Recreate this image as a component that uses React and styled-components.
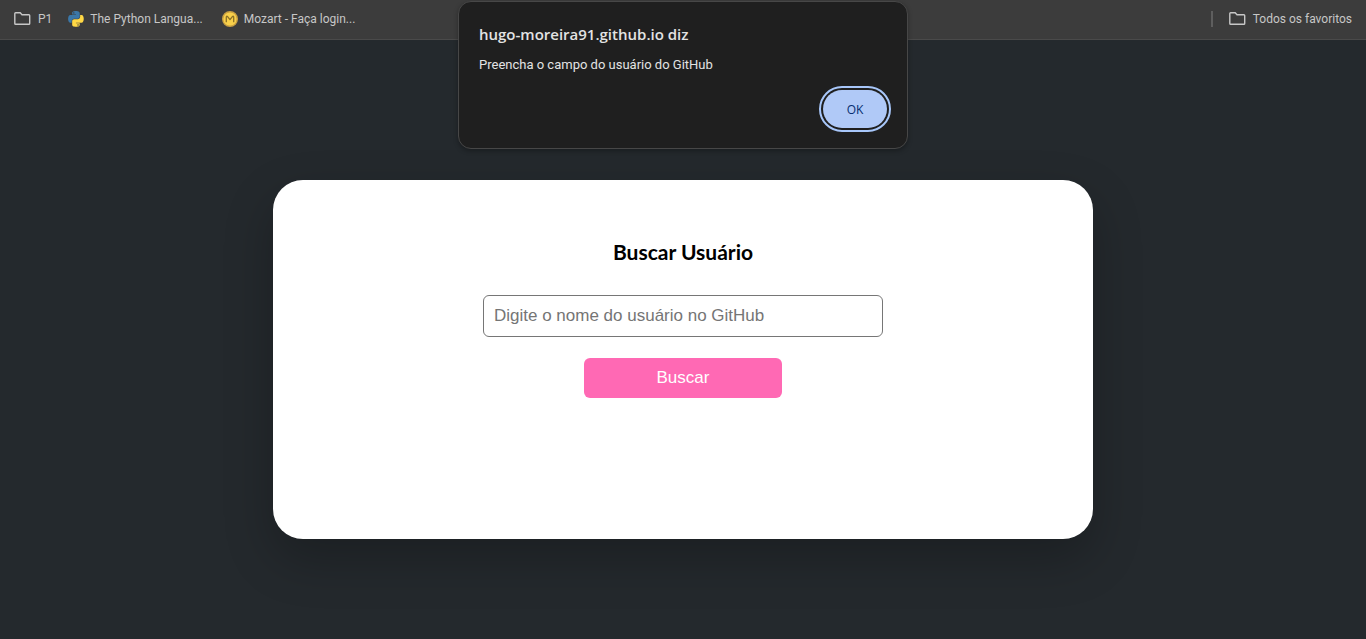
import React from "react";
import styled, { createGlobalStyle } from "styled-components";

const GlobalStyle = createGlobalStyle`
  *, *::before, *::after { box-sizing: border-box; }
  body {
    margin: 0;
    background: #24292d;
    font-family: Roboto, "Open Sans", sans-serif;
  }
`;

const Page = styled.div`
  min-height: 100vh;
  display: flex;
  flex-direction: column;
`;

const BookmarksBar = styled.nav`
  display: flex;
  align-items: center;
  height: 40px;
  padding: 0 14px 2px;
  background: #3c3c3c;
  border-bottom: 1px solid #4a4a4a;
`;

const Bookmark = styled.a`
  display: flex;
  align-items: center;
  gap: ${(p) => p.$gap || 6}px;
  margin-right: ${(p) => p.$after || 0}px;
  color: #c7c7c7;
  font-size: 12px;
  line-height: 16px;
  white-space: nowrap;
  text-decoration: none;

  svg { flex: none; }
`;

const BarDivider = styled.span`
  width: 2px;
  height: 16px;
  margin: 0 16px 0 auto;
  background: #5e5e5e;
`;

const Dialog = styled.section`
  position: absolute;
  top: 1px;
  left: 50%;
  transform: translateX(-50%);
  width: 450px;
  padding: 21px 20px 20px;
  border: 1px solid #474747;
  border-radius: 13px;
  background: #1f1f1f;
  box-shadow: 0 2px 5px rgba(0, 0, 0, 0.3);
  color: #e3e3e3;
`;

const DialogTitle = styled.h2`
  margin: 0 0 11px;
  font-family: "Open Sans", sans-serif;
  font-size: 15px;
  font-weight: 600;
  line-height: 22px;
`;

const DialogText = styled.p`
  margin: 0 0 16px;
  font-size: 13px;
  line-height: 18px;
`;

const DialogActions = styled.div`
  display: flex;
  justify-content: flex-end;
`;

const OkButton = styled.button`
  width: 64px;
  height: 38px;
  padding: 0;
  border: 0;
  border-radius: 19px;
  outline: 2px solid #a8c7fa;
  outline-offset: 2px;
  background: #b0c9f7;
  color: #062e6f;
  font-family: "Open Sans", sans-serif;
  font-size: 12px;
  font-weight: 500;
`;

const Card = styled.main`
  width: 60%;
  min-height: 359px;
  margin: 140px auto 100px;
  padding: 60px 20px;
  display: flex;
  flex-direction: column;
  align-items: center;
  border-radius: 30px;
  background: #fff;
  box-shadow: 0 20px 50px rgba(0, 0, 0, 0.24);
`;

const SearchForm = styled.form`
  display: flex;
  flex-direction: column;
  align-items: center;
  width: 100%;
`;

const SearchLabel = styled.label`
  margin-bottom: 31px;
  color: #000;
  font-family: Lato, sans-serif;
  font-size: 21px;
  font-weight: 700;
  line-height: 24px;
`;

const SearchInput = styled.input`
  width: 400px;
  max-width: 100%;
  height: 42px;
  padding: 0 10px;
  border: 1px solid #767676;
  border-radius: 6px;
  background: #fff;
  font-family: "Liberation Sans", Arial, sans-serif;
  font-size: 17px;

  &::placeholder { color: #757575; opacity: 1; }
`;

const SearchButton = styled.button`
  width: 198px;
  height: 40px;
  margin-top: 21px;
  padding: 0;
  border: 0;
  border-radius: 6px;
  background: #ff69b4;
  color: #fff;
  font-family: "Liberation Sans", Arial, sans-serif;
  font-size: 17px;
`;

function FolderIcon() {
  return (
    <svg width="17" height="13" viewBox="0 0 17 13" aria-hidden="true">
      <path
        d="M.8 1.6V11.4Q.8 12.2 1.600 12.200H14.900Q15.700 12.200 15.700 11.400V3.600Q15.700 2.800 14.900 2.800H8L6.200.8H1.600Q.8.8.8 1.600Z"
        fill="none"
        stroke="#c7c7c7"
        strokeWidth="1.4"
      />
    </svg>
  );
}

function PythonIcon() {
  return (
    <svg width="16" height="16" viewBox="0 0 111 114" aria-hidden="true">
      <path
        fill="#3b77a8"
        d="M54.3 0C49.7 0 45.4.4 41.5 1.1 30.1 3.1 28 7.3 28 15.2V25.5H55V29H18C10.2 29 3.3 33.7 1.1 42.6-1.4 52.8-1.5 59.2 1.1 70 3.1 78 7.7 83.7 15.5 83.7H24.8V71.4C24.8 62.5 32.5 54.6 41.7 54.6H68.5C76 54.6 82 48.4 82 40.9V15.2C82 7.9 75.8 2.4 68.5 1.1 63.9.3 58.9 0 54.3 0ZM39.7 8.3A5.2 5.2 0 1 1 39.7 18.7 5.2 5.2 0 0 1 39.7 8.3Z"
      />
      <path
        fill="#ffd845"
        d="M85.1 29V41C85.1 50.3 77.3 58.1 68.5 58.1H41.7C34.3 58.1 28.2 64.4 28.2 71.7V97.4C28.2 104.7 34.6 109 41.7 111 50.3 113.5 58.5 114 68.5 111 75.3 109 82 105 82 97.4V87H55V83.7H95.3C103.1 83.7 106 78.2 108.7 70 111.5 61.6 111.4 53.5 108.7 42.6 106.8 34.9 103.1 29 95.3 29ZM70 94A5.2 5.2 0 1 1 70 104.4 5.2 5.2 0 0 1 70 94Z"
      />
    </svg>
  );
}

function MozartIcon() {
  return (
    <svg width="16" height="16" viewBox="0 0 16 16" aria-hidden="true">
      <circle cx="8" cy="8" r="7.3" fill="#f9d04a" stroke="#c9a042" strokeWidth="1.4" />
      <path
        d="M4.3 11.3V6.2Q4.3 4.6 5.6 5.6L8 8.6L10.4 5.6Q11.7 4.6 11.7 6.2V11.3"
        fill="none"
        stroke="#8a7028"
        strokeWidth="1.3"
        strokeLinejoin="round"
      />
    </svg>
  );
}

export default function App() {
  return (
    <Page>
      <GlobalStyle />
      <BookmarksBar>
        <Bookmark href="#p1" $gap={7} $after={16}>
          <FolderIcon />
          <span>P1</span>
        </Bookmark>
        <Bookmark href="#python" $after={19}>
          <PythonIcon />
          <span>The Python Langua...</span>
        </Bookmark>
        <Bookmark href="#mozart">
          <MozartIcon />
          <span>Mozart - Faça login...</span>
        </Bookmark>
        <BarDivider />
        <Bookmark href="#favoritos" $gap={7}>
          <FolderIcon />
          <span>Todos os favoritos</span>
        </Bookmark>
      </BookmarksBar>

      <Card>
        <SearchForm onSubmit={(event) => event.preventDefault()}>
          <SearchLabel htmlFor="username">Buscar Usuário</SearchLabel>
          <SearchInput id="username" type="text" placeholder="Digite o nome do usuário no GitHub" />
          <SearchButton type="submit">Buscar</SearchButton>
        </SearchForm>
      </Card>

      <Dialog role="alertdialog" aria-labelledby="dialog-title" aria-describedby="dialog-text">
        <DialogTitle id="dialog-title">hugo-moreira91.github.io diz</DialogTitle>
        <DialogText id="dialog-text">Preencha o campo do usuário do GitHub</DialogText>
        <DialogActions>
          <OkButton type="button">OK</OkButton>
        </DialogActions>
      </Dialog>
    </Page>
  );
}
